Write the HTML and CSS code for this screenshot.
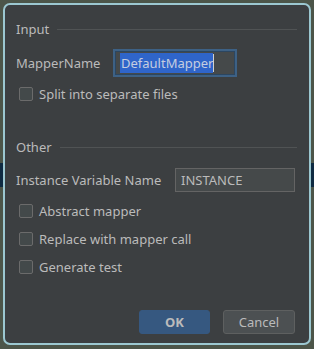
FILE: index.html
```html
<!DOCTYPE html>
<html lang="en">
<head>
  <meta charset="UTF-8">
  <title>Generate Mapper</title>
  <link rel="stylesheet" href="styles.css">
</head>
<body>

<div class="stripe stripe-left"></div>
<div class="stripe stripe-right"></div>

<div class="dialog">
  <div class="section-title">
    <span>Input</span>
    <div class="rule"></div>
  </div>

  <div class="field-row">
    <label>MapperName</label>
    <div class="text-field focused"><span class="selection">DefaultMapper</span><span class="caret"></span></div>
  </div>

  <div class="check-row first">
    <span class="checkbox"></span>
    <span>Split into separate files</span>
  </div>

  <div class="section-title other">
    <span>Other</span>
    <div class="rule"></div>
  </div>

  <div class="field-row instance">
    <label>Instance Variable Name</label>
    <div class="text-field">INSTANCE</div>
  </div>

  <div class="check-row first">
    <span class="checkbox"></span>
    <span>Abstract mapper</span>
  </div>
  <div class="check-row">
    <span class="checkbox"></span>
    <span>Replace with mapper call</span>
  </div>
  <div class="check-row">
    <span class="checkbox"></span>
    <span>Generate test</span>
  </div>

  <div class="buttons">
    <button class="btn-ok">OK</button>
    <button class="btn-cancel">Cancel</button>
  </div>
</div>

</body>
</html>
```

FILE: styles.css
```css
* { margin: 0; padding: 0; box-sizing: border-box; }
body {
  font-family: 'Noto Sans', 'Open Sans', sans-serif;
  font-size: 13px;
  color: #bbbbbb;
  background: #4c5549;
  width: 314px;
  height: 349px;
  overflow: hidden;
  position: relative;
}
/* bits of the window behind the dialog */
.stripe {
  position: absolute;
  top: 163px;
  height: 24px;
  background: #0f2b42;
}
.stripe-left { left: 0; width: 3px; }
.stripe-right { right: 0; width: 3px; }

.dialog {
  position: relative;
  margin: 3px 0 0 3px;
  width: 308px;
  height: 342px;
  background: #3c3f41;
  border: 2px solid #9cc8d1;
  border-radius: 7px;
  padding: 15px 14px 0 11px;
  display: flex;
  flex-direction: column;
}
.section-title {
  height: 18px;
  display: flex;
  align-items: center;
  gap: 8px;
}
.section-title .rule {
  flex: 1;
  height: 1px;
  background: #505354;
  margin-right: -2px;
  margin-top: 1px;
}
.section-title.other { margin-top: 37px; }

.field-row {
  display: flex;
  align-items: center;
  margin-top: 11px;
  height: 28px;
}
.field-row label { width: 99px; }
.field-row.instance { margin-top: 12px; height: 24px; }
.field-row.instance label { width: 159px; }

.text-field {
  width: 120px;
  height: 24px;
  background: #45494a;
  border: 1px solid #646464;
  padding-left: 5px;
  display: flex;
  align-items: center;
}
.text-field.focused {
  border-color: #2c4660;
  box-shadow: 0 0 0 2px #3d6185;
  padding-left: 4px;
}
.selection {
  background: #2f65ca;
  color: #c5cde0;
  height: 20px;
  line-height: 20px;
  padding-left: 1px;
}
.caret {
  width: 1px;
  height: 18px;
  background: #d0d0d0;
}

.check-row {
  display: flex;
  align-items: center;
  gap: 6px;
  height: 14px;
  margin-top: 14px;
  padding-left: 3px;
}
.check-row.first { margin-top: 10px; }
.field-row.instance + .check-row.first { margin-top: 12px; }
.checkbox {
  width: 14px;
  height: 14px;
  border: 1px solid #6b6b6b;
  background: #43494a;
  border-radius: 2px;
}

.buttons {
  display: flex;
  justify-content: flex-end;
  gap: 13px;
  margin-top: 36px;
}
.buttons button {
  font-family: inherit;
  font-size: 13px;
  height: 24px;
  border-radius: 3px;
  color: #bbbbbb;
}
.btn-ok {
  width: 71px;
  background: #365880;
  border: 1px solid #365880;
  font-weight: bold;
}
.btn-cancel {
  width: 72px;
  background: #4c5052;
  border: 1px solid #5e6060;
}
```
